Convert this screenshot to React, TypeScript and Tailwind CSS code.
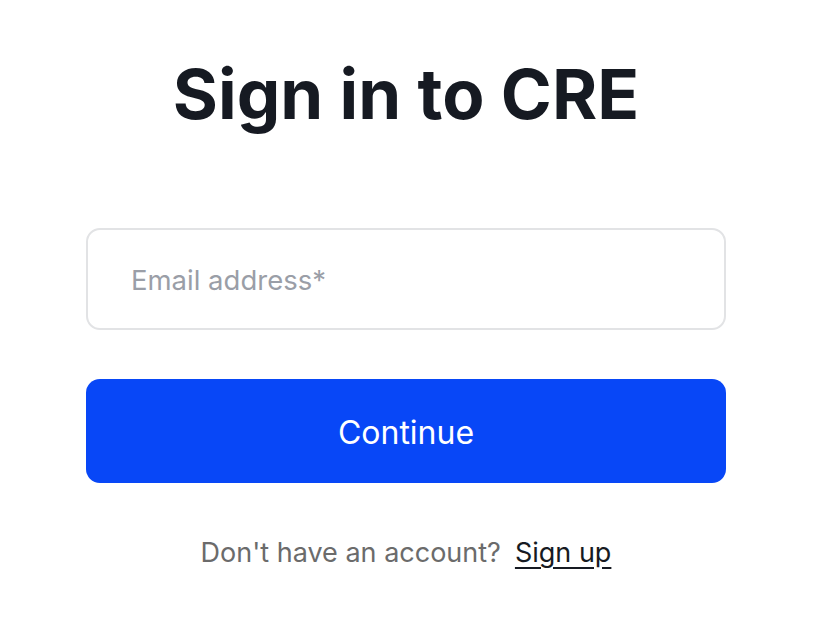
import React from 'react';

const App: React.FC = () => {
    return (
        <div className="bg-white min-h-screen w-full" style={{ fontFamily: 'Inter, "Noto Sans", sans-serif' }}>
            <div className="w-[640px] ml-[86px] flex flex-col items-center pt-[54px]">
                <h1 className="text-[69px] leading-[80px] font-bold text-[#161a22]">Sign in to CRE</h1>

                <div className="w-full mt-[94px]">
                    <input
                        type="email"
                        placeholder="Email address*"
                        className="w-full h-[102px] rounded-[14px] border-2 border-[#e2e3e5] px-[43px] pt-[2px] text-[27.5px] text-[#161a22] placeholder:text-[#9a9ea7] outline-none"
                    />
                </div>

                <button className="w-full h-[104px] mt-[49px] pt-[3px] rounded-[14px] bg-[#0847f7] text-white text-[32px] font-normal">
                    Continue
                </button>

                <p className="mt-[50px] text-[27px] text-[#6b6b6b]">
                    Don't have an account?
                    <a href="#" className="ml-[14px] text-[#161a22] underline underline-offset-[5px]">Sign up</a>
                </p>
            </div>
        </div>
    );
};

export default App;
